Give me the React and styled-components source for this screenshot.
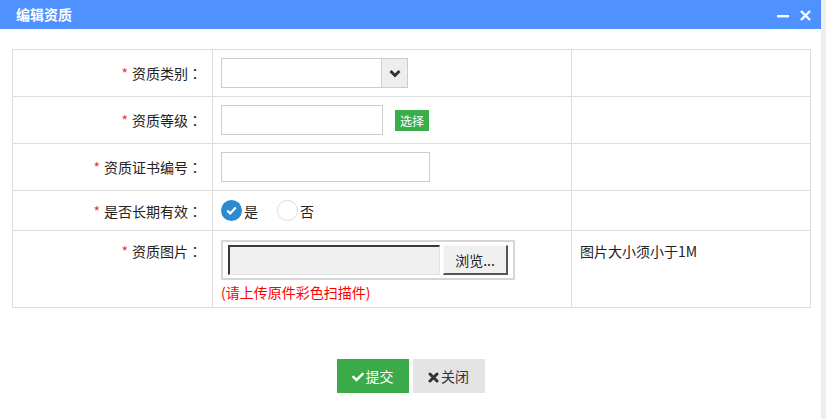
import React, { useState } from "react";
import styled, { createGlobalStyle } from "styled-components";
import { FaCheck } from "react-icons/fa";

const GlobalStyle = createGlobalStyle`
  html, body {
    margin: 0;
    padding: 0;
    background: #fff;
  }
  body {
    font-family: "Noto Sans CJK SC", "Noto Sans", "Liberation Sans", sans-serif;
    font-size: 14px;
    color: #333;
  }
`;

const Page = styled.div`
  display: flex;
  width: 826px;
  height: 419px;
  overflow: hidden;
`;

const Dialog = styled.div`
  width: 821px;
  display: flex;
  flex-direction: column;
  background: #fff;
`;

const Track = styled.div`
  flex: 1;
  background: #eeeeee;
`;

const TitleBar = styled.div`
  height: 29px;
  background: #4f91fe;
  display: flex;
  align-items: center;
  justify-content: space-between;
  padding: 0 10px 0 16px;
  color: #fff;
`;

const Title = styled.span`
  font-size: 14px;
  font-weight: bold;
  line-height: 29px;
`;

const WinTools = styled.div`
  display: flex;
  align-items: center;
  gap: 11px;
  margin-top: 1px;
`;

const Body = styled.div`
  padding: 20px 10px 0 12px;
`;

const FormTable = styled.table`
  width: 799px;
  border-collapse: collapse;
  table-layout: fixed;
  td {
    border: 1px solid #dddddd;
    padding: 0;
    box-sizing: border-box;
  }
`;

const Row = styled.tr`
  height: ${(p) => p.$h}px;
`;

const LabelCell = styled.td`
  width: 200px;
  text-align: right;
  padding-right: 10px !important;
  vertical-align: ${(p) => (p.$top ? "top" : "middle")};
  padding-top: ${(p) => (p.$top ? "10px" : "0")} !important;
  line-height: 20px;
  color: #222;
`;

const Star = styled.span`
  color: #e4393c;
  margin-right: 4px;
`;

const Colon = styled.span`
  font-family: "Noto Sans CJK JP", "Noto Sans CJK SC", sans-serif;
`;

const FieldCell = styled.td`
  width: 359px;
  padding-left: 8px !important;
  vertical-align: ${(p) => (p.$top ? "top" : "middle")};
  padding-top: ${(p) => (p.$top ? "9px" : "0")} !important;
`;

const NoteCell = styled.td`
  padding-left: 8px !important;
  vertical-align: top;
  padding-top: 10px !important;
  line-height: 20px;
  color: #222;
`;

const Line = styled.div`
  display: flex;
  align-items: center;
`;

const SelectBox = styled.div`
  width: 187px;
  height: 30px;
  box-sizing: border-box;
  border: 1px solid #cccccc;
  display: flex;
  background: #fff;
`;

const SelectValue = styled.div`
  flex: 1;
`;

const SelectArrow = styled.div`
  width: 25px;
  border-left: 1px solid #cccccc;
  background: #eeeeee;
  display: flex;
  align-items: center;
  justify-content: center;
`;

const TextInput = styled.input`
  width: ${(p) => p.$w}px;
  height: 30px;
  box-sizing: border-box;
  border: 1px solid #cccccc;
  padding: 0 6px;
  font: inherit;
  outline: none;
`;

const PickButton = styled.button`
  margin-left: 12px;
  width: 34px;
  height: 21px;
  border: none;
  padding: 0;
  background: #3aae4a;
  color: #fff;
  font-family: inherit;
  font-size: 12px;
  line-height: 21px;
`;

const RadioGroup = styled.div`
  display: flex;
  align-items: center;
  gap: 19px;
`;

const RadioItem = styled.label`
  display: flex;
  align-items: center;
  line-height: 20px;
  cursor: pointer;
  color: #222;
`;

const RadioDot = styled.span`
  width: 21px;
  height: 21px;
  box-sizing: border-box;
  border-radius: 50%;
  margin-right: 2px;
  display: flex;
  align-items: center;
  justify-content: center;
  background: ${(p) => (p.$on ? "#2b8bd0" : "#fff")};
  border: ${(p) => (p.$on ? "none" : "1px solid #dcdcdc")};
`;

const FileBox = styled.div`
  width: 294px;
  height: 40px;
  box-sizing: border-box;
  border: 2px solid #d6d6d6;
  padding: 3px 5px;
  display: flex;
  gap: 3px;
`;

const FileName = styled.div`
  width: 212px;
  height: 30px;
  box-sizing: border-box;
  background: #f0f0f0;
  border-style: solid;
  border-width: 2px 1px 1px 2px;
  border-color: #3a3a3a #e3e3e3 #e3e3e3 #3a3a3a;
`;

const BrowseButton = styled.div`
  width: 65px;
  height: 30px;
  box-sizing: border-box;
  background: #f0f0f0;
  border-style: solid;
  border-width: 1px 2px 2px 1px;
  border-color: #f8f8f8 #555 #555 #f8f8f8;
  display: flex;
  align-items: center;
  justify-content: center;
  font-size: 14px;
  color: #222;
`;

const Hint = styled.div`
  color: #ff0000;
  margin-top: 2px;
  line-height: 20px;
`;

const Actions = styled.div`
  display: flex;
  justify-content: center;
  gap: 4px;
  margin-top: 51px;
  padding-right: 2px;
`;

const ActionButton = styled.button`
  width: 72px;
  height: 34px;
  border: none;
  padding: 0;
  display: flex;
  align-items: center;
  justify-content: center;
  gap: 2px;
  font-family: inherit;
  font-size: 14px;
  background: ${(p) => (p.$primary ? "#3aab48" : "#e4e4e4")};
  color: ${(p) => (p.$primary ? "#fff" : "#333")};
  svg {
    margin-top: 2px;
  }
`;

function Label({ children, top }) {
  return (
    <LabelCell $top={top}>
      <Star>*</Star>
      {children}
      <Colon>：</Colon>
    </LabelCell>
  );
}

function CheckMark() {
  return (
    <svg width="11" height="9" viewBox="0 0 11 9">
      <path d="M1.2 4.6 L4.2 7.4 L9.8 1.4" fill="none" stroke="#fff" strokeWidth="2.2" />
    </svg>
  );
}

function Chevron() {
  return (
    <svg width="12" height="9" viewBox="0 0 12 9">
      <path d="M1.5 2 L6 6.5 L10.5 2" fill="none" stroke="#333" strokeWidth="3" strokeLinejoin="miter" />
    </svg>
  );
}

function HeavyX() {
  return (
    <svg width="11" height="11" viewBox="0 0 11 11">
      <path d="M2 2 L9 9 M9 2 L2 9" stroke="#333" strokeWidth="3" strokeLinecap="round" />
    </svg>
  );
}

export default function App() {
  const [longTerm, setLongTerm] = useState(true);

  return (
    <>
      <GlobalStyle />
      <Page>
        <Dialog>
          <TitleBar>
            <Title>编辑资质</Title>
            <WinTools>
              <svg width="12" height="12" viewBox="0 0 12 12">
                <rect x="0" y="6" width="12" height="2.4" fill="#fff" />
              </svg>
              <svg width="11" height="11" viewBox="0 0 11 11">
                <path d="M1 1 L10 10 M10 1 L1 10" stroke="#fff" strokeWidth="2.4" />
              </svg>
            </WinTools>
          </TitleBar>
          <Body>
            <FormTable>
              <tbody>
                <Row $h={47}>
                  <Label>资质类别</Label>
                  <FieldCell>
                    <SelectBox>
                      <SelectValue />
                      <SelectArrow>
                        <Chevron />
                      </SelectArrow>
                    </SelectBox>
                  </FieldCell>
                  <NoteCell />
                </Row>
                <Row $h={47}>
                  <Label>资质等级</Label>
                  <FieldCell>
                    <Line>
                      <TextInput $w={162} />
                      <PickButton>选择</PickButton>
                    </Line>
                  </FieldCell>
                  <NoteCell />
                </Row>
                <Row $h={47}>
                  <Label>资质证书编号</Label>
                  <FieldCell>
                    <TextInput $w={209} />
                  </FieldCell>
                  <NoteCell />
                </Row>
                <Row $h={40}>
                  <Label>是否长期有效</Label>
                  <FieldCell>
                    <RadioGroup>
                      <RadioItem onClick={() => setLongTerm(true)}>
                        <RadioDot $on={longTerm}>{longTerm && <CheckMark />}</RadioDot>
                        是
                      </RadioItem>
                      <RadioItem onClick={() => setLongTerm(false)}>
                        <RadioDot $on={!longTerm}>{!longTerm && <CheckMark />}</RadioDot>
                        否
                      </RadioItem>
                    </RadioGroup>
                  </FieldCell>
                  <NoteCell />
                </Row>
                <Row $h={77}>
                  <Label top>资质图片</Label>
                  <FieldCell $top>
                    <FileBox>
                      <FileName />
                      <BrowseButton>浏览...</BrowseButton>
                    </FileBox>
                    <Hint>(请上传原件彩色扫描件)</Hint>
                  </FieldCell>
                  <NoteCell>图片大小须小于1M</NoteCell>
                </Row>
              </tbody>
            </FormTable>
            <Actions>
              <ActionButton $primary>
                <FaCheck size={12} />
                提交
              </ActionButton>
              <ActionButton>
                <HeavyX />
                关闭
              </ActionButton>
            </Actions>
          </Body>
        </Dialog>
        <Track />
      </Page>
    </>
  );
}
